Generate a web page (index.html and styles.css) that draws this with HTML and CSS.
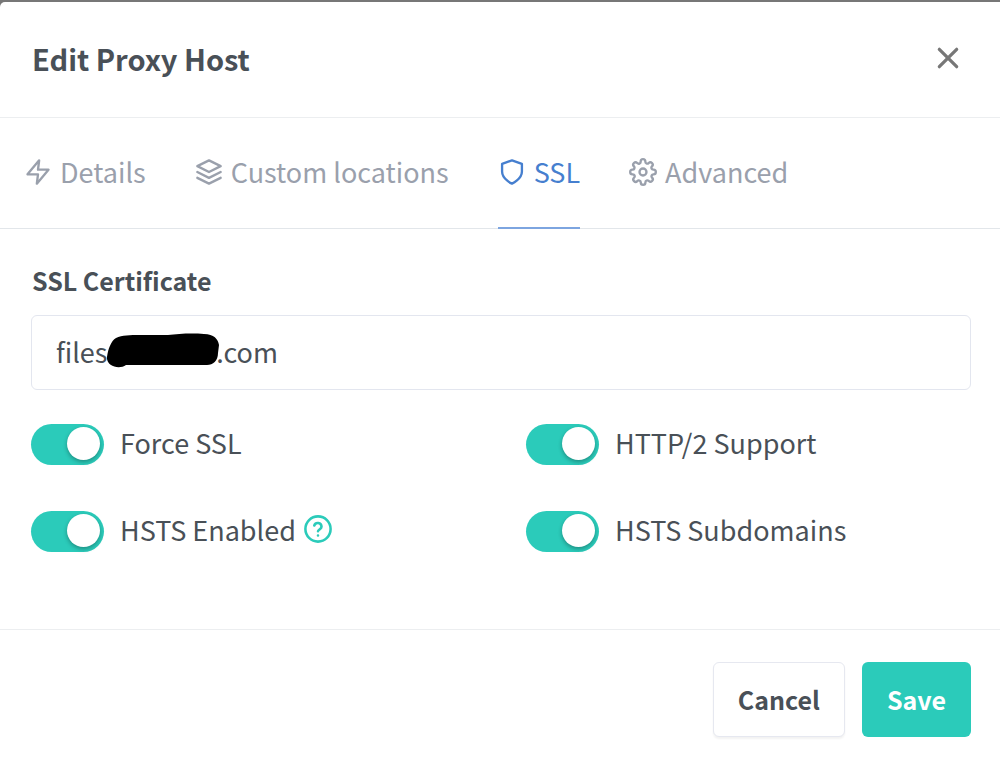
FILE: index.html
```html
<!DOCTYPE html>
<html lang="en">
<head>
<meta charset="utf-8">
<meta name="viewport" content="width=device-width, initial-scale=1">
<title>Edit Proxy Host</title>
<link rel="stylesheet" href="styles.css">
</head>
<body>
<form class="modal" role="dialog" aria-labelledby="modal-title">
  <header class="modal-header">
    <h1 class="modal-title" id="modal-title">Edit Proxy Host</h1>
    <button class="close" type="button" aria-label="Close">
      <svg class="close-icon" viewBox="0 0 24 24"><path d="M4 4 20 20M20 4 4 20"/></svg>
    </button>
  </header>

  <nav class="tabs">
    <a class="tab" href="#details">
      <svg class="icon" viewBox="0 0 24 24"><path d="M13 2 3 14h9l-1 8 10-12h-9l1-8z"/></svg>
      <span>Details</span>
    </a>
    <a class="tab" href="#locations">
      <svg class="icon" viewBox="0 0 24 24"><path d="M12 2 2 7l10 5 10-5-10-5zM2 17l10 5 10-5M2 12l10 5 10-5"/></svg>
      <span>Custom locations</span>
    </a>
    <a class="tab active" href="#ssl" aria-current="page">
      <svg class="icon" viewBox="0 0 24 24"><path d="M12 22s8.500-4 8.500-10.500V5L12 2 3.500 5v6.500C3.500 18 12 22 12 22z"/></svg>
      <span>SSL</span>
    </a>
    <a class="tab" href="#advanced">
      <svg class="icon" viewBox="0 0 24 24"><circle cx="12" cy="12" r="3"/><path d="M19.400 15a1.650 1.650 0 0 0 .330 1.820l.060.060a2 2 0 0 1-2.830 2.830l-.060-.060a1.650 1.650 0 0 0-2.820 1.170V21a2 2 0 0 1-4 0v-.090A1.650 1.650 0 0 0 9 19.400a1.650 1.650 0 0 0-1.820.330l-.060.060a2 2 0 0 1-2.830-2.830l.060-.060A1.650 1.650 0 0 0 3.180 14H3a2 2 0 0 1 0-4h.090A1.650 1.650 0 0 0 4.600 9a1.650 1.650 0 0 0-.330-1.820l-.060-.060a2 2 0 0 1 2.830-2.830l.060.060A1.650 1.650 0 0 0 10 3.180V3a2 2 0 0 1 4 0v.090a1.650 1.650 0 0 0 2.820 1.260l.060-.060a2 2 0 0 1 2.830 2.830l-.060.060A1.650 1.650 0 0 0 20.910 10H21a2 2 0 0 1 0 4h-.090a1.650 1.650 0 0 0-1.510 1z"/></svg>
      <span>Advanced</span>
    </a>
  </nav>

  <section class="modal-body">
    <label class="field-label" for="certificate">SSL Certificate</label>
    <div class="field">
      <input class="field-input" id="certificate" type="text" value="files&nbsp;&nbsp;&nbsp;&nbsp;&nbsp;&nbsp;&nbsp;&nbsp;&nbsp;&nbsp;&nbsp;&nbsp;&nbsp;&nbsp;&nbsp;&nbsp;&nbsp;&nbsp;.com">
      <svg class="redaction" viewBox="0 0 114 36" aria-hidden="true"><path d="M1 25C2 17 5 9 10 6C16 3 24 3 34 3C46 3 52 3 62 3C72 2 84 1 98 2C108 2 112 7 113 13L112 21C112 29 107 33 101 33L20 33C13 38 0 34 1 25Z"/></svg>
    </div>

    <div class="options">
      <label class="option"><input class="switch" type="checkbox" role="switch" checked><span>Force SSL</span></label>
      <label class="option"><input class="switch" type="checkbox" role="switch" checked><span>HTTP/2 Support</span></label>
      <div class="option-group">
        <label class="option"><input class="switch" type="checkbox" role="switch" checked><span>HSTS Enabled</span></label>
        <a class="help" href="#hsts" aria-label="About HSTS">
          <svg class="help-icon" viewBox="0 0 24 24"><circle cx="12" cy="12" r="10.800"/><path d="M8.800 9a3.200 3.200 0 0 1 6.200 1c0 2-3 2.600-3 4M12 17.500v.1"/></svg>
        </a>
      </div>
      <label class="option"><input class="switch" type="checkbox" role="switch" checked><span>HSTS Subdomains</span></label>
    </div>
  </section>

  <footer class="modal-footer">
    <button class="btn btn-secondary" type="button">Cancel</button>
    <button class="btn btn-primary" type="submit">Save</button>
  </footer>
</form>
</body>
</html>
```
FILE: styles.css
```css
* {
  box-sizing: border-box;
}

body {
  margin: 0;
  padding-top: 2px;
  min-height: 100vh;
  display: flex;
  background: #777;
  color: #495057;
  font-family: "Noto Sans CJK SC", "Noto Sans", sans-serif;
  font-size: 27px;
  line-height: 40px;
}

.modal {
  flex: 1;
  display: flex;
  flex-direction: column;
  background: #fff;
  border-radius: 5px 0 0 0;
}

.modal-header {
  display: flex;
  align-items: center;
  justify-content: space-between;
  padding: 36px 39px 39px 32px;
  border-bottom: 1px solid #eceef0;
}

.modal-title {
  margin: 0;
  font-size: 29px;
  font-weight: 700;
  line-height: 40px;
}

.close {
  display: flex;
  padding: 0;
  border: 0;
  background: none;
}

.close-icon {
  width: 26px;
  height: 26px;
  fill: none;
  stroke: #777;
  stroke-width: 3;
  stroke-linecap: round;
}

.tabs {
  display: flex;
  gap: 49px;
  padding: 0 24px;
  border-bottom: 1px solid #e2e6ea;
}

.tab {
  display: flex;
  align-items: center;
  gap: 8px;
  padding: 34px 0 35px;
  margin-bottom: -1px;
  border-bottom: 2px solid transparent;
  color: #9aa0ac;
  text-decoration: none;
}

.tab.active {
  color: #467fcf;
  border-bottom-color: #7da5e0;
}

.icon {
  width: 28px;
  height: 28px;
  fill: none;
  stroke: currentColor;
  stroke-width: 2;
  stroke-linecap: round;
  stroke-linejoin: round;
}

.modal-body {
  padding: 31px 29px 77px 31px;
}

.field-label {
  display: block;
  margin-bottom: 15px;
  padding-left: 1px;
  font-size: 25px;
  font-weight: 700;
}

.field {
  position: relative;
}

.field-input {
  display: block;
  width: 100%;
  height: 75px;
  padding: 0 24px 2px;
  border: 1px solid #e3e6ef;
  border-radius: 6px;
  background: #fff;
  color: inherit;
  font: inherit;
}

.redaction {
  position: absolute;
  left: 75px;
  top: 17px;
  width: 114px;
  height: 36px;
}

.options {
  display: grid;
  grid-template-columns: 1fr 1fr;
  gap: 46px 50px;
  margin-top: 34px;
}

.option,
.option-group {
  display: flex;
  align-items: flex-start;
  gap: 16px;
  line-height: 38px;
}

.option-group {
  gap: 8px;
}

.switch {
  appearance: none;
  flex: none;
  width: 73px;
  height: 41px;
  margin: 0;
  padding: 3px 4px;
  display: flex;
  border-radius: 21px;
  background: #2bcbba;
}

.switch::before {
  content: "";
  width: 33px;
  height: 33px;
  border-radius: 50%;
  background: #fff;
}

.switch:checked::before {
  margin-left: auto;
  box-shadow: 0 2px 4px rgba(0, 0, 0, 0.3);
}

.help {
  display: flex;
  padding: 4px 0;
}

.help-icon {
  width: 28px;
  height: 28px;
  fill: none;
  stroke: #2bcbba;
  stroke-width: 2.2;
  stroke-linecap: round;
}

.modal-footer {
  display: flex;
  justify-content: flex-end;
  gap: 17px;
  padding: 32px 29px 28px;
  border-top: 1px solid #eceef0;
}

.btn {
  padding: 16px 24px;
  border: 1px solid transparent;
  border-radius: 6px;
  font: inherit;
  font-size: 25px;
  font-weight: 700;
  line-height: 41px;
}

.btn-secondary {
  background: #fff;
  border-color: #e6e8f0;
  box-shadow: 0 2px 2px rgba(0, 0, 0, 0.05);
  color: #495057;
}

.btn-primary {
  background: #2bcbba;
  color: #fff;
}
```
